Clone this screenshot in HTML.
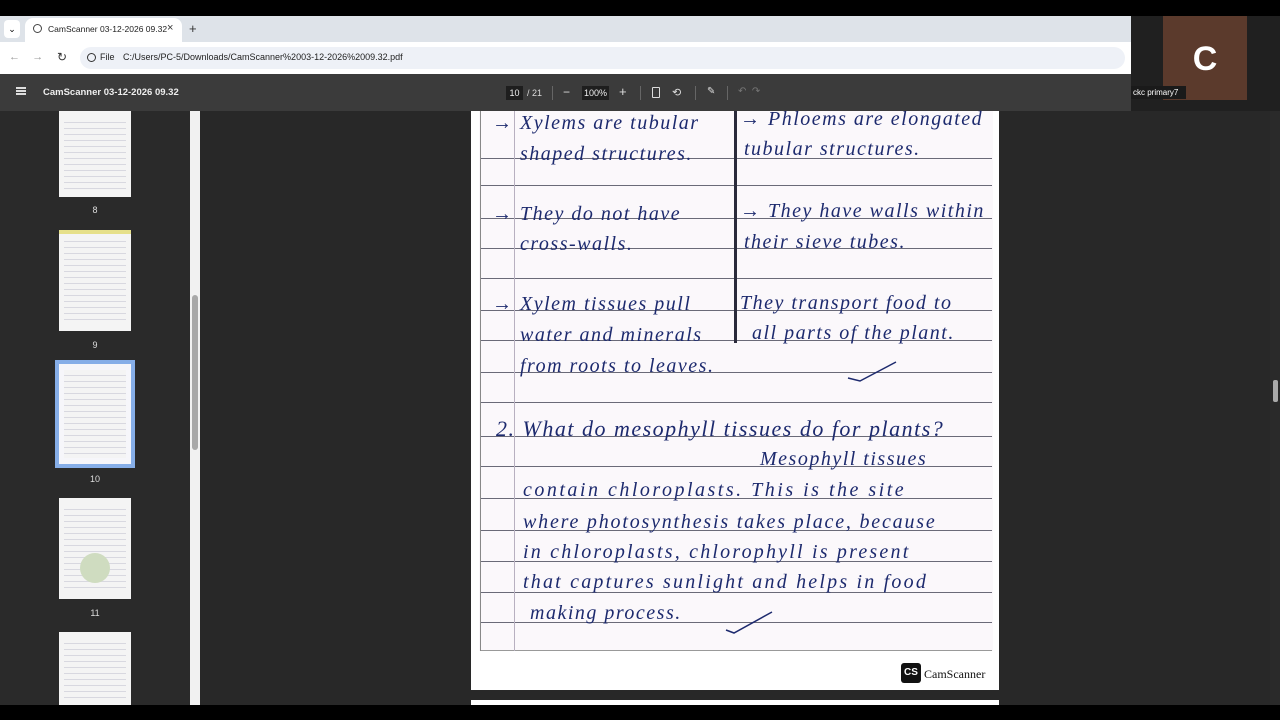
<!DOCTYPE html>
<html><head><style>
*{margin:0;padding:0;box-sizing:border-box}
body{width:1280px;height:720px;overflow:hidden;background:#282828;font-family:"Liberation Sans",sans-serif;position:relative}
.abs{position:absolute}
.hw{position:absolute;font-family:"Liberation Serif",serif;font-style:italic;color:#1d2a6e;font-size:20px;letter-spacing:1.5px;white-space:nowrap}
.ln{position:absolute;left:481px;width:511px;height:1px;background:#6a6a78}
.th{position:absolute;left:59px;width:72px;border:6px solid #f4f4f4;border-left-width:5px;border-right-width:5px;background:#f4f4f4 repeating-linear-gradient(180deg,transparent 0 5px,#d8d8e0 5px 6px);background-clip:padding-box}
.tn{position:absolute;width:190px;text-align:center;color:#ddd;font-size:9px}
</style></head><body>
<div class="abs" style="left:0;top:0;width:1280px;height:16px;background:#000"></div>
<div class="abs" style="left:0;top:16px;width:1131px;height:26px;background:#dee3e9"></div>
<div class="abs" style="left:4px;top:20px;width:16px;height:18px;background:#fff;border-radius:4px;font-size:9px;text-align:center;line-height:18px">⌄</div>
<div class="abs" style="left:25px;top:18px;width:157px;height:24px;background:#fff;border-radius:8px 8px 0 0"></div>
<div class="abs" style="left:33px;top:24px;width:9px;height:9px;border:1.5px solid #444;border-radius:50%"></div>
<div class="abs" style="left:48px;top:24px;font-size:8.5px;color:#222">CamScanner 03-12-2026 09.32</div>
<div class="abs" style="left:167px;top:22px;font-size:11px;color:#333">×</div>
<div class="abs" style="left:189px;top:21px;font-size:13px;color:#333">+</div>
<div class="abs" style="left:0;top:42px;width:1131px;height:32px;background:#fff"></div>
<div class="abs" style="left:9px;top:51px;font-size:11px;color:#999">←&nbsp;&nbsp;&nbsp;&nbsp;→</div>
<div class="abs" style="left:57px;top:50px;font-size:12px;color:#333">↻</div>
<div class="abs" style="left:80px;top:47px;width:1045px;height:22px;background:#eef1f7;border-radius:11px"></div>
<div class="abs" style="left:87px;top:53px;width:9px;height:9px;border:1px solid #333;border-radius:50%"></div>
<div class="abs" style="left:100px;top:52px;font-size:9px;color:#222">File</div>
<div class="abs" style="left:123px;top:52px;font-size:9px;color:#222">C:/Users/PC-5/Downloads/CamScanner%2003-12-2026%2009.32.pdf</div>
<div class="abs" style="left:1131px;top:16px;width:149px;height:95px;background:#202020"></div>
<div class="abs" style="left:1163px;top:16px;width:84px;height:84px;background:#5b3a2c;color:#fff;font-size:34px;font-weight:bold;text-align:center;line-height:86px">C</div>
<div class="abs" style="left:1131px;top:86px;width:55px;height:13px;background:#1a1a1a;color:#fff;font-size:8px;line-height:13px;padding-left:2px">ckc primary7</div>
<div class="abs" style="left:0;top:74px;width:1131px;height:37px;background:#3b3b3b"></div>
<div class="abs" style="left:16px;top:87px;width:10px;height:1.5px;background:#ddd;box-shadow:0 3px 0 #ddd,0 6px 0 #ddd"></div>
<div class="abs" style="left:43px;top:87px;font-size:9.5px;color:#eee;font-weight:bold">CamScanner 03-12-2026 09.32</div>
<div class="abs" style="left:506px;top:86px;width:17px;height:14px;background:#1e1e1e;color:#eee;font-size:9px;text-align:center;line-height:14px">10</div>
<div class="abs" style="left:527px;top:88px;font-size:9px;color:#ddd">/ 21</div>
<div class="abs" style="left:552px;top:86px;width:1px;height:14px;background:#666"></div>
<div class="abs" style="left:563px;top:85px;font-size:12px;color:#ddd">−</div>
<div class="abs" style="left:582px;top:86px;width:27px;height:14px;background:#1e1e1e;color:#eee;font-size:9px;text-align:center;line-height:14px">100%</div>
<div class="abs" style="left:619px;top:84px;font-size:13px;color:#ddd">+</div>
<div class="abs" style="left:640px;top:86px;width:1px;height:14px;background:#666"></div>
<div class="abs" style="left:652px;top:87px;width:8px;height:11px;border:1px solid #ddd;border-radius:1px"></div>
<div class="abs" style="left:672px;top:86px;font-size:11px;color:#ddd">⟲</div>
<div class="abs" style="left:695px;top:86px;width:1px;height:14px;background:#666"></div>
<div class="abs" style="left:707px;top:86px;font-size:10px;color:#ddd">✎</div>
<div class="abs" style="left:727px;top:86px;width:1px;height:14px;background:#666"></div>
<div class="abs" style="left:738px;top:86px;font-size:10px;color:#777">↶&nbsp;&nbsp;↷</div>
<div class="abs" style="left:0;top:111px;width:190px;height:594px;background:#2a2a2a"></div>
<div class="abs" style="left:190px;top:111px;width:10px;height:594px;background:#f1f1f1"></div>
<div class="abs" style="left:192px;top:295px;width:6px;height:155px;background:#a8a8a8;border-radius:3px"></div>
<div class="th" style="top:111px;height:86px"></div>
<div class="tn" style="top:205px">8</div>
<div class="th" style="top:230px;height:101px"></div>
<div class="abs" style="left:59px;top:230px;width:72px;height:4px;background:#e6e08a"></div>
<div class="tn" style="top:340px">9</div>
<div class="abs" style="left:55px;top:360px;width:80px;height:108px;background:#86aee8"></div>
<div class="th" style="top:364px;height:100px;border-color:#f6f6fa"></div>
<div class="tn" style="top:474px">10</div>
<div class="th" style="top:498px;height:101px"></div>
<div class="abs" style="left:80px;top:553px;width:30px;height:30px;border-radius:50%;background:#cfdcc0"></div>
<div class="tn" style="top:608px">11</div>
<div class="th" style="top:632px;height:73px"></div>
<div class="abs" style="left:1270px;top:111px;width:10px;height:594px;background:#2a2a2a"></div>
<div class="abs" style="left:1273px;top:380px;width:5px;height:22px;background:#aaa;border-radius:2px"></div>
<div class="abs" style="left:471px;top:111px;width:528px;height:579px;background:#fff"></div>
<div class="abs" style="left:479px;top:111px;width:514px;height:540px;background:#fbf8fb"></div>
<div class="abs" style="left:471px;top:700px;width:528px;height:5px;background:#fff"></div>
<div class="ln" style="top:158px"></div><div class="ln" style="top:185px"></div>
<div class="ln" style="top:218px"></div><div class="ln" style="top:248px"></div>
<div class="ln" style="top:278px"></div><div class="ln" style="top:310px"></div>
<div class="ln" style="top:340px"></div><div class="ln" style="top:372px"></div>
<div class="ln" style="top:402px"></div><div class="ln" style="top:436px"></div>
<div class="ln" style="top:466px"></div><div class="ln" style="top:498px"></div>
<div class="ln" style="top:530px"></div><div class="ln" style="top:561px"></div>
<div class="ln" style="top:592px"></div><div class="ln" style="top:622px"></div>
<div class="ln" style="top:650px;background:#999"></div>
<div class="abs" style="left:514px;top:111px;width:1px;height:540px;background:#b8b0c0"></div>
<div class="abs" style="left:734px;top:111px;width:3px;height:232px;background:#2a2a3a"></div>
<div class="abs" style="left:480px;top:111px;width:1px;height:540px;background:#888"></div>
<div class="hw" style="left:492px;top:112px">→ Xylems are tubular</div>
<div class="hw" style="left:520px;top:143px">shaped structures.</div>
<div class="hw" style="left:740px;top:108px">→ Phloems are elongated</div>
<div class="hw" style="left:744px;top:138px">tubular structures.</div>
<div class="hw" style="left:492px;top:203px">→ They do not have</div>
<div class="hw" style="left:520px;top:233px">cross-walls.</div>
<div class="hw" style="left:740px;top:200px">→ They have walls within</div>
<div class="hw" style="left:744px;top:231px">their sieve tubes.</div>
<div class="hw" style="left:492px;top:293px">→ Xylem tissues pull</div>
<div class="hw" style="left:520px;top:324px">water and minerals</div>
<div class="hw" style="left:520px;top:355px">from roots to leaves.</div>
<div class="hw" style="left:740px;top:292px">They transport food to</div>
<div class="hw" style="left:752px;top:322px">all parts of the plant.</div>
<div class="hw" style="left:496px;top:416px;font-size:22px">2. What do mesophyll tissues do for plants?</div>
<div class="hw" style="left:760px;top:448px">Mesophyll tissues</div>
<div class="hw" style="left:523px;top:479px;letter-spacing:2.5px">contain chloroplasts. This is the site</div>
<div class="hw" style="left:523px;top:511px;letter-spacing:1.8px">where photosynthesis takes place, because</div>
<div class="hw" style="left:523px;top:541px;letter-spacing:2.2px">in chloroplasts, chlorophyll is present</div>
<div class="hw" style="left:523px;top:571px;letter-spacing:2.2px">that captures sunlight and helps in food</div>
<div class="hw" style="left:530px;top:602px">making process.</div>
<svg class="abs" style="left:700px;top:350px" width="220" height="290"><path d="M148 28 L160 31 L196 12" stroke="#1d2a6e" stroke-width="1.5" fill="none"/><path d="M26 280 L34 283 L72 262" stroke="#1d2a6e" stroke-width="1.5" fill="none"/></svg>
<div class="abs" style="left:901px;top:663px;width:20px;height:20px;background:#111;color:#fff;font-size:10px;font-weight:bold;text-align:center;line-height:20px;border-radius:3px">CS</div>
<div class="abs" style="left:924px;top:667px;font-family:'Liberation Serif',serif;font-size:12px;color:#111">CamScanner</div>
<div class="abs" style="left:0;top:705px;width:1280px;height:15px;background:#000"></div>
</body></html>
